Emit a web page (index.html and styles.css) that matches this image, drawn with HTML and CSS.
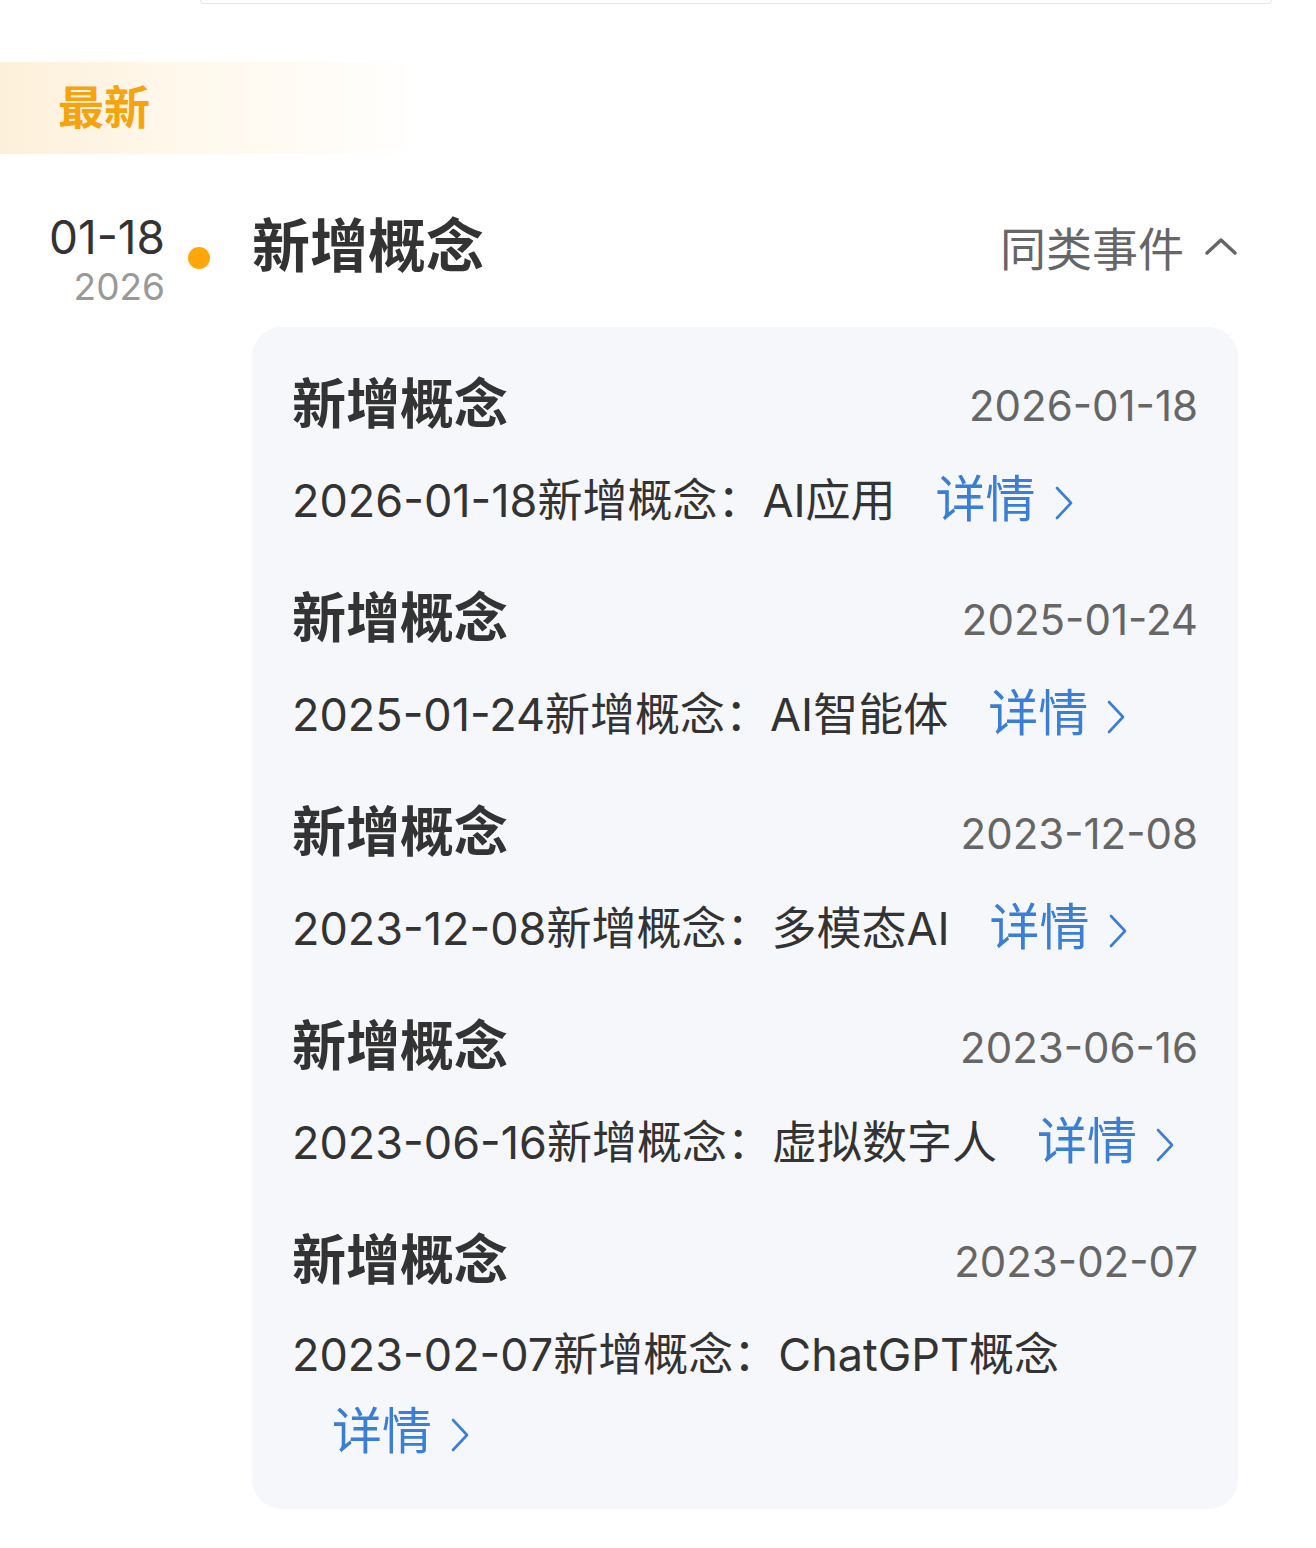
FILE: index.html
```html
<!DOCTYPE html>
<html lang="zh-CN">
<head>
  <meta charset="UTF-8">
  <meta name="viewport" content="width=device-width, initial-scale=1.0">
  <title>最新事件</title>
  <link rel="stylesheet" href="styles.css">
</head>
<body>
  <div class="top-card"></div>

  <div class="tab">最新</div>

  <section class="event">
    <div class="event-date">
      <div class="event-day">01-18</div>
      <div class="event-year">2026</div>
    </div>
    <span class="event-dot"></span>

    <div class="event-body">
      <div class="event-head">
        <h2>新增概念</h2>
        <div class="similar">
          同类事件
          <svg class="arrow-up" width="34" height="20" viewBox="0 0 34 20">
            <path d="M3 17 L17 4 L31 17" fill="none" stroke="#666" stroke-width="3.5" stroke-linecap="round" stroke-linejoin="round"/>
          </svg>
        </div>
      </div>

      <div class="similar-list">
        <div class="similar-item">
          <div class="item-head">
            <h3>新增概念</h3>
            <span class="item-date">2026-01-18</span>
          </div>
          <p class="item-desc">2026-01-18新增概念：AI应用<a class="detail" href="#">详情<svg width="20" height="36" viewBox="0 0 20 36"><path d="M3 3 L17 18 L3 33" fill="none" stroke="#3a7fd5" stroke-width="2.6" stroke-linecap="round" stroke-linejoin="round"/></svg></a></p>
        </div>
        <div class="similar-item">
          <div class="item-head">
            <h3>新增概念</h3>
            <span class="item-date">2025-01-24</span>
          </div>
          <p class="item-desc">2025-01-24新增概念：AI智能体<a class="detail" href="#">详情<svg width="20" height="36" viewBox="0 0 20 36"><path d="M3 3 L17 18 L3 33" fill="none" stroke="#3a7fd5" stroke-width="2.6" stroke-linecap="round" stroke-linejoin="round"/></svg></a></p>
        </div>
        <div class="similar-item">
          <div class="item-head">
            <h3>新增概念</h3>
            <span class="item-date">2023-12-08</span>
          </div>
          <p class="item-desc">2023-12-08新增概念：多模态AI<a class="detail" href="#">详情<svg width="20" height="36" viewBox="0 0 20 36"><path d="M3 3 L17 18 L3 33" fill="none" stroke="#3a7fd5" stroke-width="2.6" stroke-linecap="round" stroke-linejoin="round"/></svg></a></p>
        </div>
        <div class="similar-item">
          <div class="item-head">
            <h3>新增概念</h3>
            <span class="item-date">2023-06-16</span>
          </div>
          <p class="item-desc">2023-06-16新增概念：虚拟数字人<a class="detail" href="#">详情<svg width="20" height="36" viewBox="0 0 20 36"><path d="M3 3 L17 18 L3 33" fill="none" stroke="#3a7fd5" stroke-width="2.6" stroke-linecap="round" stroke-linejoin="round"/></svg></a></p>
        </div>
        <div class="similar-item">
          <div class="item-head">
            <h3>新增概念</h3>
            <span class="item-date">2023-02-07</span>
          </div>
          <p class="item-desc">2023-02-07新增概念：ChatGPT概念<a class="detail" href="#">详情<svg width="20" height="36" viewBox="0 0 20 36"><path d="M3 3 L17 18 L3 33" fill="none" stroke="#3a7fd5" stroke-width="2.6" stroke-linecap="round" stroke-linejoin="round"/></svg></a></p>
        </div>
      </div>
    </div>
  </section>
</body>
</html>
```

FILE: styles.css
```css
body {
  margin: 0;
  background-color: #ffffff;
  font-family: Inter, "Noto Sans CJK SC", sans-serif;
  color: #333333;
}

.top-card {
  height: 3px;
  margin: 0 44px 0 200px;
  border: 1px solid #e4e7ec;
  border-top: none;
  border-radius: 0 0 20px 20px;
}

.tab {
  width: 365px;
  height: 92px;
  margin-top: 58px;
  padding-left: 58px;
  line-height: 90px;
  font-size: 46px;
  font-weight: 700;
  color: #f5a30f;
  background: linear-gradient(to right, #fdf0da, #fff8ec 45%, #ffffff);
}

.event {
  display: flex;
  align-items: flex-start;
  margin-top: 56px;
  margin-right: 78px;
}

.event-date {
  width: 165px;
  padding-top: 2px;
  text-align: right;
}

.event-day {
  font-size: 46px;
  line-height: 50px;
  color: #333333;
}

.event-year {
  font-size: 37px;
  line-height: 50px;
  color: #999999;
}

.event-dot {
  flex: none;
  width: 22px;
  height: 22px;
  margin: 37px 0 0 23px;
  border-radius: 50%;
  background-color: #ffa60a;
}

.event-body {
  flex: 1;
  margin-left: 42px;
}

.event-head {
  display: flex;
  align-items: center;
  justify-content: space-between;
}

.event-head h2 {
  margin: 0;
  font-size: 58px;
  line-height: 72px;
  font-weight: 700;
  color: #333333;
}

.similar {
  display: flex;
  align-items: center;
  gap: 20px;
  font-size: 46px;
  color: #666666;
}

.similar-list {
  margin-top: 45px;
  padding: 42px 40px 38px;
  border-radius: 30px;
  background-color: #f5f7fa;
}

.similar-item + .similar-item {
  margin-top: 44px;
}

.item-head {
  display: flex;
  align-items: center;
  justify-content: space-between;
}

.item-head h3 {
  margin: 0;
  font-size: 54px;
  line-height: 72px;
  font-weight: 700;
  color: #333333;
}

.item-date {
  font-size: 42px;
  color: #666666;
}

.item-desc {
  margin: 20px 0 0;
  font-size: 45px;
  line-height: 76px;
  color: #333333;
}

.detail {
  margin-left: 40px;
  font-size: 50px;
  color: #3a7fd5;
  text-decoration: none;
  white-space: nowrap;
}

.detail svg {
  margin-left: 18px;
  vertical-align: -4px;
}
```
